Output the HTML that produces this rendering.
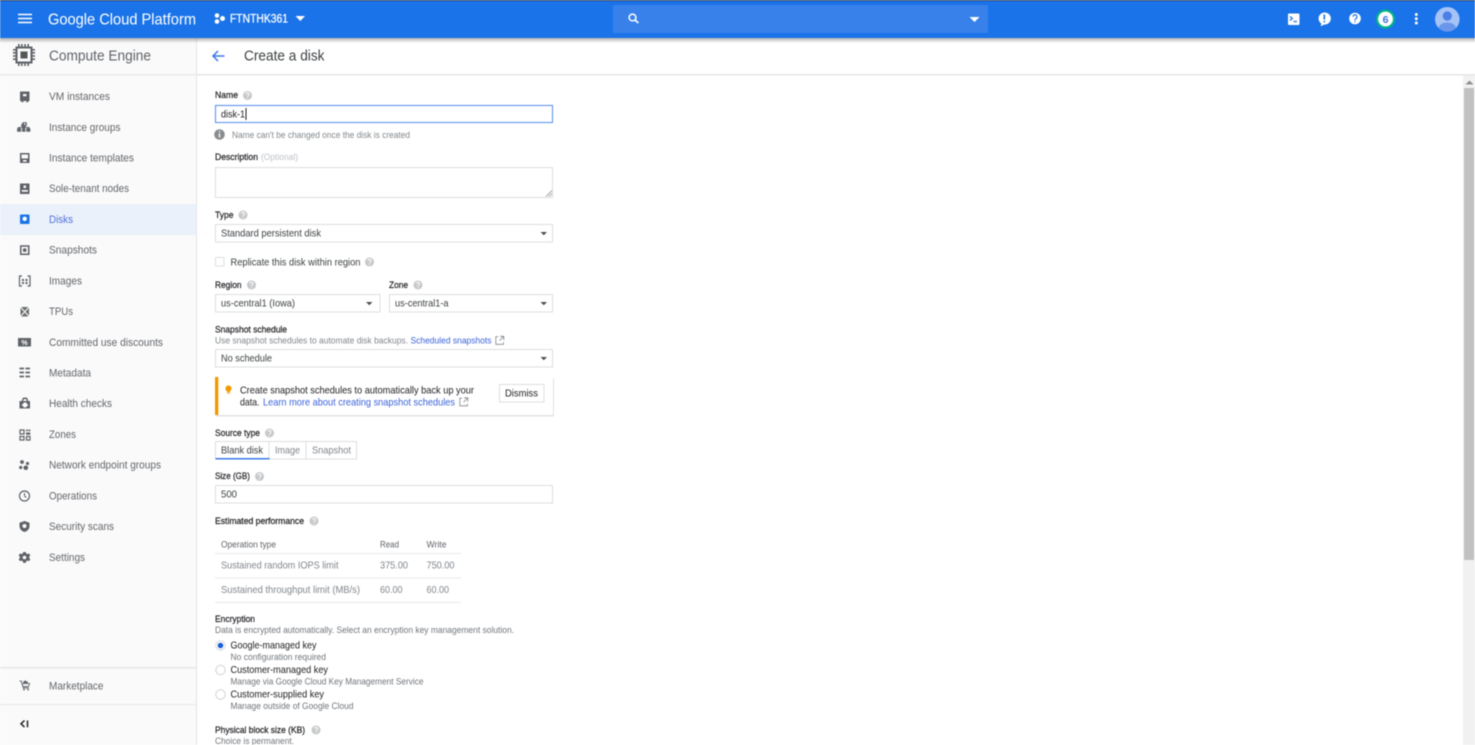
<!DOCTYPE html>
<html lang="en"><head><meta charset="utf-8"><title>Create a disk</title>
<style>
html,body{margin:0;padding:0;width:1475px;height:745px;overflow:hidden;background:#fff}
svg{display:block;filter:blur(.4px)}
text{font-family:"Liberation Sans",sans-serif;white-space:pre}
.n{font-size:11.2px;fill:#63666b}
.l{font-size:9.4px;fill:#202124;stroke:#202124;stroke-width:.22}
.t{font-size:10.4px;fill:#3c4043}
.s{font-size:9px;fill:#80868b}
.a{font-size:9.4px;fill:#3b62d8}
.m{font-size:10.4px;fill:#80868b}
.box{fill:#fff;stroke:#dcdee0;stroke-width:1}
.line{stroke:#e8e9ea;stroke-width:1}
.ic{fill:#5f6368}
.ar{fill:#4a4d50}
</style></head><body>
<svg width="1475" height="745" viewBox="0 0 1475 745" xmlns="http://www.w3.org/2000/svg">
<defs>
<linearGradient id="sh" x1="0" y1="0" x2="0" y2="1"><stop offset="0" stop-color="#000" stop-opacity=".3"/><stop offset="1" stop-color="#000" stop-opacity="0"/></linearGradient>
<g id="h"><circle r="4.500" fill="#c6c8ca"/><path d="M-1.500-1.200a1.500 1.500 0 1 1 2.400 1.200c-.6.4-.9.7-.9 1.300M0 2.200v.9" stroke="#fff" fill="none" stroke-width="1"/></g>
<g id="x"><path d="M3 1.200H.8v7.600h7.600V6.700M5 .8h3.800v3.800M8.800 .8 4.500 5.100" fill="none" stroke="#80868b" stroke-width=".8"/></g>
</defs>

<!-- sidebar -->
<rect x="0" y="38" width="196" height="707" fill="#fafafa"/>
<rect x="196" y="38" width="1" height="707" fill="#e4e5e6"/>
<rect x="0" y="74" width="196" height="1.500" fill="#e8e9ea"/>
<rect x="197" y="74" width="1278" height="1.500" fill="#e4e5e6"/>
<rect x="0" y="204" width="196" height="31" fill="#ebf1fa"/>
<rect x="0" y="667" width="196" height="1.500" fill="#e6e7e8"/>
<rect x="0" y="704" width="196" height="1" fill="#e6e7e8"/>

<!-- top bar -->
<rect x="0" y="38" width="1475" height="5" fill="url(#sh)"/>
<rect x="0" y="0" width="1475" height="38" fill="#1a73e8"/>
<rect x="0" y="0" width="1475" height="1" fill="#2b3a55"/>
<path d="M18 14.500h14M18 18.500h14M18 22.500h14" stroke="#fff" stroke-width="1.600"/>
<text x="48" y="24.500" font-size="16" fill="#fff" textLength="148" lengthAdjust="spacingAndGlyphs">Google Cloud Platform</text>
<circle cx="217" cy="15.500" r="2.300" fill="#fff"/><circle cx="217" cy="21.500" r="2.300" fill="#fff"/><circle cx="222.500" cy="18.500" r="2.500" fill="#fff"/>
<text x="230" y="22.500" font-size="11.500" fill="#fff" stroke="#fff" stroke-width=".25" textLength="58" lengthAdjust="spacingAndGlyphs">FTNTHK361</text>
<path d="M295.500 16h9.500l-4.700 5z" fill="#fff"/>
<rect x="613" y="5" width="375" height="28" rx="1" fill="#3881ea"/>
<circle cx="632.500" cy="17.500" r="3.400" fill="none" stroke="#fff" stroke-width="1.500"/><path d="M635 20l3.300 3" stroke="#fff" stroke-width="1.700"/>
<path d="M969.500 17h10l-5 5z" fill="#fff"/>
<rect x="1288" y="13.500" width="11.500" height="11.500" rx="1" fill="#fff"/>
<path d="M1290 16.500l2.300 2-2.300 2M1293.500 21.500h3.500" stroke="#1a73e8" fill="none" stroke-width="1.200"/>
<path d="M1324.300 12.500a6 6 0 0 1 1 12h-.9l-3.800 1.700.8-2.600a6 6 0 0 1 2.900-11.100z" fill="#fff"/>
<path d="M1324.300 14.500v5M1324.300 20.800v1.500" stroke="#1a73e8" stroke-width="1.600"/>
<circle cx="1355" cy="18.500" r="5.800" fill="#fff"/>
<path d="M1353 16.800a2 2 0 1 1 3.200 1.600c-.8.6-1.200.9-1.200 1.700M1355 21v1.200" stroke="#1a73e8" fill="none" stroke-width="1.200"/>
<circle cx="1385.500" cy="19" r="8.500" fill="#fff" stroke="#00b389" stroke-width="2.200"/>
<text x="1385.500" y="23" font-size="10.500" font-weight="bold" fill="#3b6fdc" text-anchor="middle">6</text>
<circle cx="1416.300" cy="14.500" r="1.500" fill="#fff"/><circle cx="1416.300" cy="18.800" r="1.500" fill="#fff"/><circle cx="1416.300" cy="23" r="1.500" fill="#fff"/>
<clipPath id="av"><circle cx="1447.300" cy="19.300" r="12.300"/></clipPath>
<circle cx="1447.300" cy="19.300" r="12.300" fill="#a6c3f6"/>
<g clip-path="url(#av)"><circle cx="1447.300" cy="16" r="4.600" fill="#4a7fe6"/><ellipse cx="1447.300" cy="28" rx="8.500" ry="5.500" fill="#6b97ea"/></g>

<!-- header -->
<g fill="#5f6368">
<path d="M16.500 47.500h15v15h-15z" fill="none" stroke="#5f6368" stroke-width="2"/>
<rect x="20.500" y="51.500" width="7" height="7" fill="#555"/>
<path d="M18 44h1.600v3H18zM21 44h1.600v3H21zM24.200 44h1.600v3h-1.600zM27.400 44h1.600v3h-1.600zM18 63h1.600v3H18zM21 63h1.600v3H21zM24.200 63h1.600v3h-1.600zM27.400 63h1.600v3h-1.600zM13 49h3v1.600h-3zM13 52h3v1.600h-3zM13 55.200h3v1.600h-3zM13 58.400h3v1.600h-3zM32 49h3v1.600h-3zM32 52h3v1.600h-3zM32 55.200h3v1.600h-3zM32 58.400h3v1.600h-3z"/>
</g>
<text x="49" y="60.500" font-size="14.800" fill="#5f6368" textLength="102" lengthAdjust="spacingAndGlyphs">Compute Engine</text>
<path d="M224.500 56h-11.500M218 51l-5 5 5 5" stroke="#3b78e7" fill="none" stroke-width="1.500"/>
<text x="244" y="60.500" font-size="14.800" fill="#3c4043" textLength="80.500" lengthAdjust="spacingAndGlyphs">Create a disk</text>

<!-- nav icons -->
<path class="ic" fill-rule="evenodd" d="M20 91.500h9.500v9.500h-1.200v1.200h-2v-1.200h-3v1.200h-2v-1.200H20zM23 94v2.200h3.500V94z"/>
<path class="ic" fill-rule="evenodd" d="M22.800 122.200h4v3.800h-1.200v1h3.900v1.200h.8v3.500h-4v-3.500h1.400V128h-3.300v.2h1v3.500h-3.400v-3.500h1V128h-3.300v.2h1.400v3.500h-4v-3.500h.8V127h3.900v-1h-1.200zM24 123.400v1.400h1.500v-1.400z"/>
<path class="ic" fill-rule="evenodd" d="M20 153h9.500v10H20zM21.500 154.500v4h6.500v-4zM23 160v1.800h3.500V160z"/>
<path class="ic" fill-rule="evenodd" d="M20 183.500h9.500v10.500H20zM23.500 185.500v2.500h2.500v-2.500zM21.800 191.800h6v-1.800h-6z"/>
<rect x="20" y="214.500" width="9.500" height="9.500" rx="1" fill="#1a73e8"/><circle cx="24.700" cy="218.800" r="2.200" fill="#fff"/>
<path class="ic" fill-rule="evenodd" d="M20 245.200h9.500v9.800H20zM21.500 246.700v6.800h6.500v-6.800zM24.700 248.200a1.900 1.900 0 1 1 0 3.800 1.900 1.900 0 0 1 0-3.800z"/>
<path d="M22 276h-2.500v10H22M27.500 276H30v10h-2.500" fill="none" stroke="#5f6368" stroke-width="1.200"/>
<path class="ic" d="M22 279h2v2h-2zM25.500 279h2v2h-2zM22 282h2v2h-2zM25.500 282h2v2h-2z"/>
<rect x="20.500" y="307" width="8.500" height="9.500" fill="#6a6d70"/>
<path d="M20 306.500l9.500 10.500M29.500 306.500l-9.500 10.500" stroke="#fafafa" stroke-width="1.100"/>
<rect x="18" y="338" width="13" height="8.500" fill="#5f6368"/>
<text x="24.500" y="345" font-size="7" fill="#fff" text-anchor="middle" font-weight="bold">%</text>
<path d="M19.500 368.500h4.500M25.500 368.500h4.500M19.500 372.500h4.500M25.500 372.500h4.500M19.500 376.500h4.500M25.500 376.500h4.500" stroke="#5f6368" stroke-width="1.800"/>
<path class="ic" fill-rule="evenodd" d="M19.500 401h2.500c0-3 1-3.500 3-3.500s3 .5 3 3.500h2v7.500h-10.500zM23.300 401h3.400c0-1.500-.5-2-1.700-2s-1.700.5-1.700 2z"/>
<path d="M23.500 402.500h3v1.400h1.300v2.200h-1.300v1.300h-3v-1.300h-1.300v-2.200h1.300z" fill="#fff"/>
<path d="M20 430h4v4h-4zM20 436.500h4v3.500h-4zM26.500 436.500h3.500v3.500h-3.500z" fill="none" stroke="#5f6368" stroke-width="1.200"/>
<path class="ic" d="M26 429.500h1.800v1.800H26zM28.500 429.500H30.300v1.800h-1.800zM26 432.500h4.300v2.200H26z"/>
<circle class="ic" cx="22" cy="462" r="1.900"/><circle class="ic" cx="27.500" cy="463.500" r="1.600"/><circle class="ic" cx="20.700" cy="467.500" r="1.600"/><circle class="ic" cx="25.800" cy="467.800" r="2.300"/>
<circle cx="24.500" cy="496" r="5" fill="none" stroke="#5f6368" stroke-width="1.200"/><path d="M24.500 493v3.200l2 1.300" fill="none" stroke="#5f6368" stroke-width="1"/>
<path class="ic" d="M24.500 521l5 1.800v3.200c0 3-2 5-5 6-3-1-5-3-5-6v-3.200z"/><path d="M24.500 524a2 2 0 1 1 0 4 2 2 0 0 1 0-4z" fill="#fafafa"/>
<path class="ic" fill-rule="evenodd" d="M23.200 552h2.600l.4 1.500 1.300.6 1.500-.7 1.300 2.100-1.100 1.100v1.400l1.100 1.100-1.300 2.100-1.500-.7-1.300.7-.4 1.700h-2.600l-.4-1.700-1.300-.7-1.500.7-1.300-2.100 1.100-1.100v-1.400l-1.100-1.100 1.300-2.100 1.500.7 1.300-.6zM24.500 555.700a1.800 1.800 0 1 0 0 3.600 1.800 1.800 0 0 0 0-3.600z"/>
<path d="M19.500 681h1.800l2 6.800h5.500" fill="none" stroke="#70757a" stroke-width="1.100"/>
<path d="M22 683.500h7.500l-1 3h-5.700z" fill="none" stroke="#70757a" stroke-width="1"/>
<circle cx="24" cy="689.500" r="1" fill="#70757a"/><circle cx="28" cy="689.500" r="1" fill="#70757a"/>
<path d="M25 680l1.100 1.200 1.600-.1-.2 1.500.9 1.200H23l.5-1.200-.2-1.500 1.200.1z" fill="#5f6368"/>
<path d="M24.500 720.500l-3.500 3.300 3.500 3.300M27.500 720.500v6.800" fill="none" stroke="#202124" stroke-width="1.500"/>

<!-- nav text -->
<text class="n" x="49" y="100" textLength="61" lengthAdjust="spacingAndGlyphs">VM instances</text>
<text class="n" x="49" y="131" textLength="71.500" lengthAdjust="spacingAndGlyphs">Instance groups</text>
<text class="n" x="49" y="161.500" textLength="85" lengthAdjust="spacingAndGlyphs">Instance templates</text>
<text class="n" x="49" y="192" textLength="80" lengthAdjust="spacingAndGlyphs">Sole-tenant nodes</text>
<text class="n" x="49" y="223" textLength="24" lengthAdjust="spacingAndGlyphs" style="fill:#4f6fdb">Disks</text>
<text class="n" x="49" y="253.500" textLength="48" lengthAdjust="spacingAndGlyphs">Snapshots</text>
<text class="n" x="49" y="284.500" textLength="33" lengthAdjust="spacingAndGlyphs">Images</text>
<text class="n" x="49" y="315" textLength="24" lengthAdjust="spacingAndGlyphs">TPUs</text>
<text class="n" x="49" y="346" textLength="114" lengthAdjust="spacingAndGlyphs">Committed use discounts</text>
<text class="n" x="49" y="376.500" textLength="42" lengthAdjust="spacingAndGlyphs">Metadata</text>
<text class="n" x="49" y="407" textLength="63" lengthAdjust="spacingAndGlyphs">Health checks</text>
<text class="n" x="49" y="438" textLength="27" lengthAdjust="spacingAndGlyphs">Zones</text>
<text class="n" x="49" y="468.500" textLength="112" lengthAdjust="spacingAndGlyphs">Network endpoint groups</text>
<text class="n" x="49" y="499.500" textLength="48" lengthAdjust="spacingAndGlyphs">Operations</text>
<text class="n" x="49" y="530" textLength="65" lengthAdjust="spacingAndGlyphs">Security scans</text>
<text class="n" x="49" y="561" textLength="36" lengthAdjust="spacingAndGlyphs">Settings</text>
<text class="n" x="49" y="689.500" textLength="54.500" lengthAdjust="spacingAndGlyphs">Marketplace</text>

<!-- scrollbar -->
<rect x="1463" y="75.500" width="12" height="670" fill="#f1f1f1"/>
<rect x="1464" y="88" width="10" height="472" fill="#c1c1c1"/>
<path d="M1465.500 84.500h8l-4-4z" fill="#8e8e8e"/>

<!-- form: name -->
<text class="l" x="215" y="98" textLength="23" lengthAdjust="spacingAndGlyphs">Name</text>
<use href="#h" x="247.500" y="95.500"/>
<rect x="215.500" y="105.500" width="337" height="17" fill="#fff" stroke="#5f94ee" stroke-width="1.100"/>
<text class="t" x="221" y="117.500" textLength="24" lengthAdjust="spacingAndGlyphs" style="fill:#202124">disk-1</text>
<rect x="245.500" y="108" width="1" height="12" fill="#202124"/>
<circle cx="219.500" cy="134.500" r="5.300" fill="#8a8d90"/><path d="M219.500 133.500v4M219.500 131v1.300" stroke="#fff" stroke-width="1.300"/>
<text class="s" x="232" y="138" textLength="178" lengthAdjust="spacingAndGlyphs">Name can't be changed once the disk is created</text>
<text class="l" x="215" y="160" textLength="43" lengthAdjust="spacingAndGlyphs">Description</text>
<text class="s" x="261" y="160" textLength="37" lengthAdjust="spacingAndGlyphs" style="fill:#bdc1c6">(Optional)</text>
<rect class="box" x="215.500" y="167.500" width="337" height="30"/>
<path d="M546 196.500l6-6M549 196.500l3-3" stroke="#8a8d90" stroke-width=".8"/>
<text class="l" x="215" y="218" textLength="18.500" lengthAdjust="spacingAndGlyphs">Type</text>
<use href="#h" x="243" y="215"/>
<rect class="box" x="215.500" y="224.500" width="337" height="17.500"/>
<text class="t" x="221" y="236.500" textLength="100" lengthAdjust="spacingAndGlyphs">Standard persistent disk</text>
<path class="ar" d="M540.500 232h6.500l-3.200 3.200z"/>
<rect class="box" x="215.500" y="257.500" width="8.500" height="8.500" rx=".5"/>
<text class="t" x="230.500" y="265.500" textLength="130" lengthAdjust="spacingAndGlyphs">Replicate this disk within region</text>
<use href="#h" x="369.500" y="262"/>

<text class="l" x="215" y="288" textLength="26.500" lengthAdjust="spacingAndGlyphs">Region</text>
<use href="#h" x="251.500" y="285"/>
<text class="l" x="389" y="288" textLength="19" lengthAdjust="spacingAndGlyphs">Zone</text>
<use href="#h" x="418" y="285"/>
<rect class="box" x="215.500" y="294.500" width="164.500" height="17.500"/>
<text class="t" x="221" y="306.500" textLength="74" lengthAdjust="spacingAndGlyphs">us-central1 (Iowa)</text>
<path class="ar" d="M366 302h6.500l-3.200 3.200z"/>
<rect class="box" x="389.500" y="294.500" width="163" height="17.500"/>
<text class="t" x="395" y="306.500" textLength="53.500" lengthAdjust="spacingAndGlyphs">us-central1-a</text>
<path class="ar" d="M540.500 302h6.500l-3.200 3.200z"/>

<text class="l" x="215" y="332.500" textLength="72" lengthAdjust="spacingAndGlyphs">Snapshot schedule</text>
<text class="s" x="215" y="343.500" textLength="193" lengthAdjust="spacingAndGlyphs">Use snapshot schedules to automate disk backups.</text>
<text class="a" x="410.500" y="343.500" textLength="81" lengthAdjust="spacingAndGlyphs">Scheduled snapshots</text>
<use href="#x" x="495" y="335.500"/>
<rect class="box" x="215.500" y="349.500" width="337" height="17.500"/>
<text class="t" x="221" y="361.500" textLength="51" lengthAdjust="spacingAndGlyphs">No schedule</text>
<path class="ar" d="M540.500 357h6.500l-3.200 3.200z"/>

<!-- callout -->
<rect x="216" y="378.500" width="338" height="38" fill="#e2e2e2"/>
<rect x="215" y="377" width="338" height="38" fill="#fff"/>
<rect x="215" y="377" width="3.300" height="38" fill="#f29900"/>
<path d="M228.500 385.500a3 3 0 0 1 1.800 5.400v1.100h-3.600v-1.100a3 3 0 0 1 1.800-5.400z" fill="#f29900"/><rect x="227" y="392.500" width="3" height="1" fill="#f29900"/>
<text class="t" x="240" y="393.500" textLength="234" lengthAdjust="spacingAndGlyphs" style="fill:#202124">Create snapshot schedules to automatically back up your</text>
<text class="t" x="240" y="405.500" textLength="19.500" lengthAdjust="spacingAndGlyphs" style="fill:#202124">data.</text>
<text class="a" x="263" y="405.500" textLength="192" lengthAdjust="spacingAndGlyphs" style="font-size:10.200px">Learn more about creating snapshot schedules</text>
<use href="#x" x="459" y="397"/>
<rect x="499.500" y="384.500" width="44.500" height="17.500" fill="#fff" stroke="#dcdee0"/>
<text class="t" x="505" y="396.500" textLength="33" lengthAdjust="spacingAndGlyphs" style="fill:#202124">Dismiss</text>

<!-- source type -->
<text class="l" x="215" y="436" textLength="45" lengthAdjust="spacingAndGlyphs">Source type</text>
<use href="#h" x="269.500" y="433"/>
<rect class="box" x="215.500" y="441.500" width="141" height="17.500"/>
<path d="M269 442v17M306 442v17" stroke="#dcdee0"/>
<rect x="215.500" y="458" width="54" height="1.500" fill="#3b78e7"/>
<text class="t" x="221" y="453.500" textLength="42" lengthAdjust="spacingAndGlyphs">Blank disk</text>
<text class="m" x="275" y="453.500" textLength="25" lengthAdjust="spacingAndGlyphs">Image</text>
<text class="m" x="312" y="453.500" textLength="39" lengthAdjust="spacingAndGlyphs">Snapshot</text>

<text class="l" x="215" y="479" textLength="35" lengthAdjust="spacingAndGlyphs">Size (GB)</text>
<use href="#h" x="259.500" y="476.500"/>
<rect class="box" x="215.500" y="485.500" width="337" height="17.500"/>
<text class="t" x="221" y="497.500" textLength="16" lengthAdjust="spacingAndGlyphs">500</text>

<!-- performance -->
<text class="l" x="215" y="524" textLength="89" lengthAdjust="spacingAndGlyphs">Estimated performance</text>
<use href="#h" x="314" y="521"/>
<text class="s" x="221" y="547.500" textLength="55" lengthAdjust="spacingAndGlyphs" style="fill:#5f6368">Operation type</text>
<text class="s" x="380" y="547.500" textLength="19" lengthAdjust="spacingAndGlyphs" style="fill:#5f6368">Read</text>
<text class="s" x="426.500" y="547.500" textLength="20" lengthAdjust="spacingAndGlyphs" style="fill:#5f6368">Write</text>
<path class="line" d="M215 553.500h246M215 578h246M215 602.500h246"/>
<text class="m" x="221" y="568.500" textLength="117.500" lengthAdjust="spacingAndGlyphs">Sustained random IOPS limit</text>
<text class="m" x="380" y="568.500" textLength="28" lengthAdjust="spacingAndGlyphs">375.00</text>
<text class="m" x="426.500" y="568.500" textLength="28" lengthAdjust="spacingAndGlyphs">750.00</text>
<text class="m" x="221" y="593" textLength="139" lengthAdjust="spacingAndGlyphs">Sustained throughput limit (MB/s)</text>
<text class="m" x="380" y="593" textLength="22.500" lengthAdjust="spacingAndGlyphs">60.00</text>
<text class="m" x="426.500" y="593" textLength="22.500" lengthAdjust="spacingAndGlyphs">60.00</text>

<!-- encryption -->
<text class="l" x="215" y="622" textLength="40" lengthAdjust="spacingAndGlyphs">Encryption</text>
<text class="s" x="215" y="633" textLength="299" lengthAdjust="spacingAndGlyphs" style="fill:#70757a">Data is encrypted automatically. Select an encryption key management solution.</text>
<circle cx="220.500" cy="645.500" r="4.700" fill="#fff" stroke="#d5d7da"/><circle cx="220.500" cy="645.500" r="2.800" fill="#1a5fd8"/>
<text class="t" x="230.500" y="648.500" textLength="86" lengthAdjust="spacingAndGlyphs" style="fill:#202124">Google-managed key</text>
<text class="s" x="230.500" y="660" textLength="95.500" lengthAdjust="spacingAndGlyphs" style="fill:#70757a">No configuration required</text>
<circle cx="220.500" cy="670" r="4.700" fill="#fff" stroke="#d0d2d5"/>
<text class="t" x="230.500" y="673" textLength="97.500" lengthAdjust="spacingAndGlyphs" style="fill:#202124">Customer-managed key</text>
<text class="s" x="230.500" y="684.500" textLength="193" lengthAdjust="spacingAndGlyphs" style="fill:#70757a">Manage via Google Cloud Key Management Service</text>
<circle cx="220.500" cy="694.500" r="4.700" fill="#fff" stroke="#d0d2d5"/>
<text class="t" x="230.500" y="697.500" textLength="93.500" lengthAdjust="spacingAndGlyphs" style="fill:#202124">Customer-supplied key</text>
<text class="s" x="230.500" y="709" textLength="123" lengthAdjust="spacingAndGlyphs" style="fill:#70757a">Manage outside of Google Cloud</text>
<text class="l" x="215" y="733" textLength="90" lengthAdjust="spacingAndGlyphs">Physical block size (KB)</text>
<use href="#h" x="316" y="730"/>
<text class="s" x="215" y="744" textLength="79" lengthAdjust="spacingAndGlyphs" style="fill:#70757a">Choice is permanent.</text>
</svg>
</body></html>
